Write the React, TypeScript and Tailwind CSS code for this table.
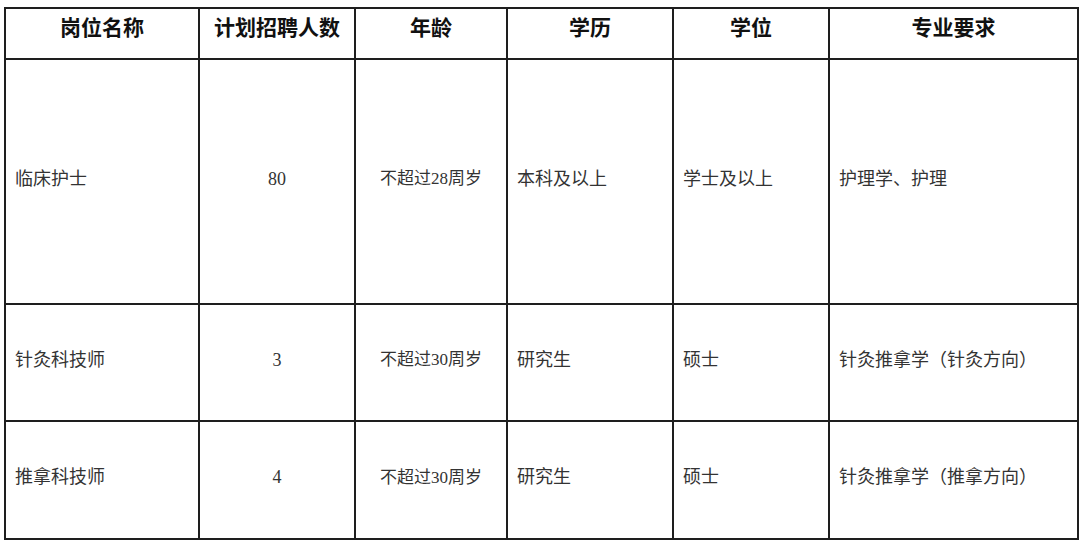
const rows = [
  {
    name: "临床护士",
    count: "80",
    age: "不超过28周岁",
    edu: "本科及以上",
    degree: "学士及以上",
    major: "护理学、护理",
    h: "h-[243px]",
  },
  {
    name: "针灸科技师",
    count: "3",
    age: "不超过30周岁",
    edu: "研究生",
    degree: "硕士",
    major: "针灸推拿学（针灸方向）",
    h: "h-[115px]",
  },
  {
    name: "推拿科技师",
    count: "4",
    age: "不超过30周岁",
    edu: "研究生",
    degree: "硕士",
    major: "针灸推拿学（推拿方向）",
    h: "h-[116px]",
  },
];

const headers = ["岗位名称", "计划招聘人数", "年龄", "学历", "学位", "专业要求"];

export default function App() {
  return (
    <div
      className="w-[1080px] h-[541px] bg-white overflow-hidden pt-[7px] pl-[4px]"
      style={{ fontFamily: '"Liberation Serif", "Noto Sans CJK SC", serif' }}
    >
      <div className="grid w-[1075px] grid-cols-[192px_154px_150px_164px_154px_247px] gap-[2px] p-[2px] bg-[#1e1e1e]">
        {/* 表头 */}
        {headers.map((h) => (
          <div
            key={h}
            className="h-[49px] bg-white flex items-start justify-center pt-[4px] text-[21px] font-bold text-[#111]"
          >
            {h}
          </div>
        ))}

        {rows.map((r) => (
          <div key={r.name} className="contents">
            <div className={`${r.h} bg-white flex items-center pl-[9px] pb-[5px] text-[18px] text-[#333]`}>
              {r.name}
            </div>
            <div className={`${r.h} bg-white flex items-center justify-center pb-[5px] text-[18px] text-[#333]`}>
              {r.count}
            </div>
            <div className={`${r.h} bg-white flex items-center justify-center pb-[5px] text-[17px] text-[#333]`}>
              {r.age}
            </div>
            <div className={`${r.h} bg-white flex items-center pl-[9px] pb-[5px] text-[18px] text-[#333]`}>
              {r.edu}
            </div>
            <div className={`${r.h} bg-white flex items-center pl-[9px] pb-[5px] text-[18px] text-[#333]`}>
              {r.degree}
            </div>
            <div className={`${r.h} bg-white flex items-center pl-[9px] pb-[5px] text-[18px] text-[#333]`}>
              {r.major}
            </div>
          </div>
        ))}
      </div>
    </div>
  );
}
